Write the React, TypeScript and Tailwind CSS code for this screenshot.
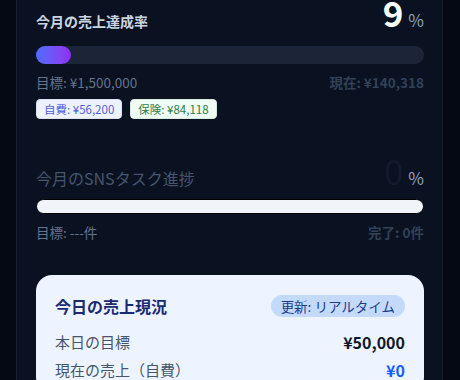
const font = { fontFamily: '"Noto Sans CJK JP", "Noto Sans", sans-serif' }

function ProgressHeader({
  title,
  value,
  titleClass,
  valueClass,
  className,
}: {
  title: string
  value: string
  titleClass: string
  valueClass: string
  className: string
}) {
  return (
    <div className={`flex items-baseline justify-between ${className}`}>
      <h3 className={titleClass}>{title}</h3>
      <div className="flex items-baseline">
        <span className={valueClass}>{value}</span>
        <span className="ml-[5px] text-[17px] leading-none text-slate-400">%</span>
      </div>
    </div>
  )
}

export default function App() {
  const rate = 9

  return (
    <div className="min-h-screen bg-[#050913]" style={font}>
      <div className="ml-[16px] w-[427px] min-h-[380px] border-x border-[#161e31] bg-[#0a1121] pl-[19px] pr-[18px]">
        {/* 今月の売上 */}
        <section>
          <ProgressHeader
            className="-mt-[3px]"
            title="今月の売上達成率"
            value={String(rate)}
            titleClass="text-[14px] font-bold leading-[20px] text-slate-300"
            valueClass="text-[35px] font-bold leading-[30px] text-white"
          />
          <div className="mt-[15px] h-[18px] w-full rounded-full bg-[#1b2537]">
            <div
              className="h-full rounded-full bg-gradient-to-r from-[#4a6cff] to-[#8e2cf0]"
              style={{ width: `${rate}%` }}
            />
          </div>
          <div className="mt-[8px] flex justify-between text-[13.5px] leading-[20px]">
            <span className="text-slate-500">目標: ¥1,500,000</span>
            <span className="font-semibold text-slate-700">現在: ¥140,318</span>
          </div>
          <div className="mt-[7px] flex gap-[8px] text-[11.5px]">
            <span className="rounded-[4px] border border-[#dbe2f5] bg-[#eef2ff] px-[7px] leading-[18px] text-[#4f5fd6]">
              自費: ¥56,200
            </span>
            <span className="rounded-[4px] border border-[#d7eadc] bg-[#effcf3] px-[7px] leading-[18px] text-[#2f7d4c]">
              保険: ¥84,118
            </span>
          </div>
        </section>

        {/* SNS */}
        <section>
          <ProgressHeader
            className="mt-[36px]"
            title="今月のSNSタスク進捗"
            value="0"
            titleClass="text-[16px] leading-[22px] text-slate-600"
            valueClass="text-[35px] leading-[30px] text-[#121a2d]"
          />
          <div className="mt-[10px] h-[15px] w-full rounded-full border border-black bg-[#f1f4f9]" />
          <div className="mt-[8px] flex justify-between text-[13.5px] leading-[20px]">
            <span className="text-slate-500">目標: ---件</span>
            <span className="font-semibold text-slate-700">完了: 0件</span>
          </div>
        </section>

        {/* 今日の売上 */}
        <section className="mt-[33px] rounded-[16px] bg-[#eef4ff] px-[19px] pt-[20px] pb-[12px]">
          <div className="flex items-center justify-between">
            <h3 className="text-[16px] font-bold leading-[22px] text-[#1a2a73]">今日の売上現況</h3>
            <span className="rounded-full bg-[#c3dafb] px-[10px] text-[13.5px] leading-[22px] text-[#1e3a8a]">
              更新: リアルタイム
            </span>
          </div>
          <div className="mt-[14px] flex flex-col gap-[6px] text-[15px] leading-[22px]">
            <div className="flex justify-between">
              <span className="text-slate-600">本日の目標</span>
              <span className="font-bold text-[16px] text-slate-900">¥50,000</span>
            </div>
            <div className="flex justify-between">
              <span className="text-slate-600">現在の売上（自費）</span>
              <span className="font-bold text-[16px] text-blue-600">¥0</span>
            </div>
          </div>
        </section>
      </div>
    </div>
  )
}
